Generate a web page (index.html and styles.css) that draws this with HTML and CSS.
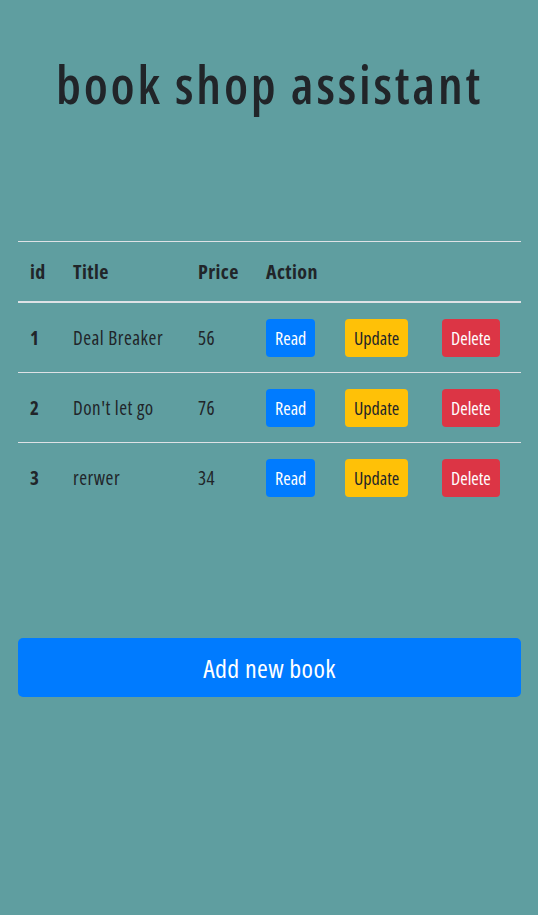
FILE: index.html
```html
<!DOCTYPE html>
<html>
<head>
<meta charset="utf-8">
<link rel="stylesheet" href="styles.css">
</head>
<body>
<div class="page">
  <h1 class="title">book shop assistant</h1>
  <table class="books">
    <colgroup>
      <col class="c-id"><col class="c-title"><col class="c-price"><col class="c-read"><col class="c-update"><col class="c-delete">
    </colgroup>
    <thead>
      <tr><th>id</th><th>Title</th><th>Price</th><th>Action</th><th></th><th></th></tr>
    </thead>
    <tbody>
      <tr><th>1</th><td>Deal Breaker</td><td>56</td><td><button class="btn btn-read">Read</button></td><td><button class="btn btn-update">Update</button></td><td><button class="btn btn-delete">Delete</button></td></tr>
      <tr><th>2</th><td>Don't let go</td><td>76</td><td><button class="btn btn-read">Read</button></td><td><button class="btn btn-update">Update</button></td><td><button class="btn btn-delete">Delete</button></td></tr>
      <tr><th>3</th><td>rerwer</td><td>34</td><td><button class="btn btn-read">Read</button></td><td><button class="btn btn-update">Update</button></td><td><button class="btn btn-delete">Delete</button></td></tr>
    </tbody>
  </table>
  <button class="add">Add new book</button>
</div>
</body>
</html>
```
FILE: styles.css
```css
html, body {
  margin: 0;
  padding: 0;
}
body {
  background: #5f9ea0;
  color: #212529;
  font-family: "Open Sans", "DejaVu Sans", sans-serif;
  font-stretch: 75%;
}
.page {
  padding: 0 17px 0 18px;
}
.title {
  margin: 0;
  padding-top: 53px;
  height: 241px;
  box-sizing: border-box;
  text-align: center;
  font-size: 52px;
  line-height: 62px;
  font-weight: 600;
  letter-spacing: 2.8px;
}
.books {
  width: 100%;
  border-collapse: collapse;
  table-layout: fixed;
  border-top: 1px solid #dee2e6;
}
.c-id { width: 43px; }
.c-title { width: 125px; }
.c-price { width: 68px; }
.c-read { width: 79px; }
.c-update { width: 97px; }
.c-delete { width: 91px; }
.books th, .books td {
  padding: 0 12px;
  text-align: left;
  vertical-align: middle;
  white-space: nowrap;
}
.books thead th {
  height: 59px;
  border-bottom: 2px solid #dee2e6;
  font-size: 20px;
  letter-spacing: 0.4px;
  font-weight: 700;
}
.books tbody th, .books tbody td {
  height: 69px;
  font-size: 19px;
  letter-spacing: 0.5px;
}
.books tbody th {
  font-weight: 700;
}
.books tbody td {
  font-weight: 400;
}
.books tbody tr + tr th, .books tbody tr + tr td {
  border-top: 1px solid #dee2e6;
}
.btn {
  height: 38px;
  padding: 0 8px;
  border: 1px solid transparent;
  border-radius: 4px;
  font-family: inherit;
  font-stretch: 75%;
  font-size: 18px;
  letter-spacing: 0;
  cursor: pointer;
  margin-top: 1px;
}
.btn-read { background: #007bff; color: #fff; }
.btn-update { background: #ffc107; color: #212529; }
.btn-delete { background: #dc3545; color: #fff; }
.add {
  display: block;
  width: 100%;
  height: 59px;
  margin-top: 126px;
  border: none;
  border-radius: 5px;
  background: #007bff;
  color: #fff;
  font-family: inherit;
  font-stretch: 75%;
  font-size: 26px;
  letter-spacing: 0.4px;
  cursor: pointer;
}
```
